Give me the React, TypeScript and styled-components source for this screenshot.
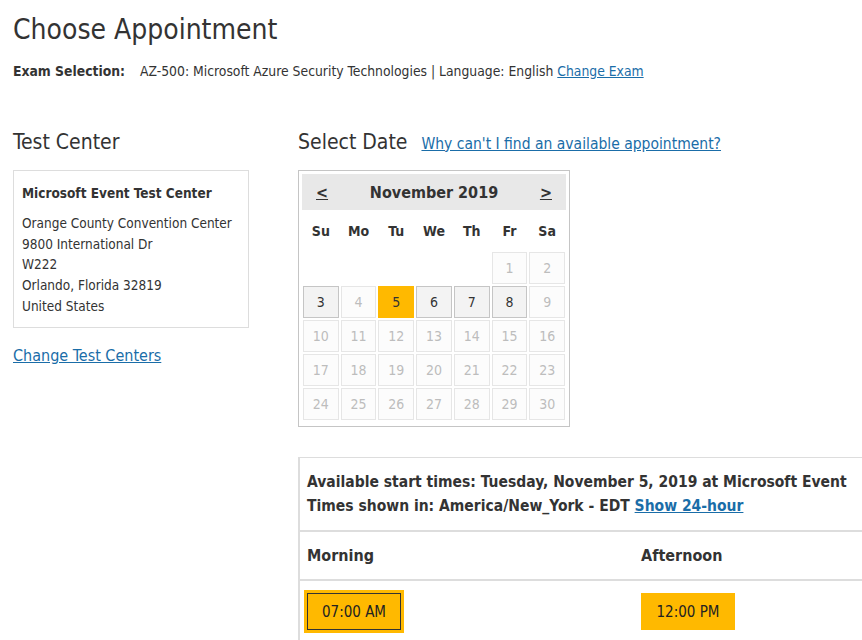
import styled, { createGlobalStyle } from 'styled-components';

const GlobalStyle = createGlobalStyle`
  html, body {
    margin: 0;
    overflow: hidden;
    background: #fff;
  }
  body {
    font-family: 'DejaVu Sans Condensed', 'DejaVu Sans', sans-serif;
    color: #333;
  }
`;

const LINK = '#1a6da8';

const Page = styled.div`
  padding: 12px 13px;
  width: 100vw;
  box-sizing: border-box;
`;
const Title = styled.h1`
  margin: 0;
  font-size: 28px;
  font-weight: normal;
  line-height: 36px;
`;
const ExamLine = styled.div`
  margin-top: 13px;
  font-size: 13.8px;
  line-height: 20px;
  white-space: nowrap;
`;
const ExamLabel = styled.b`
  margin-right: 11px;
`;
const Link = styled.a`
  color: ${LINK};
  text-decoration: underline;
  cursor: pointer;
`;
const Columns = styled.div`
  display: flex;
  margin-top: 46px;
`;
const LeftCol = styled.div`
  flex: 0 0 285px;
`;
const RightCol = styled.div`
  flex: 1;
  min-width: 0;
`;
const Heading = styled.h2`
  margin: 0;
  font-size: 21px;
  font-weight: normal;
  line-height: 30px;
`;
const CenterBox = styled.div`
  margin-top: 13px;
  width: 236px;
  box-sizing: border-box;
  border: 1px solid #ddd;
  padding: 12px 8px 10px;
  font-size: 13.5px;
  line-height: 20.8px;
`;
const CenterName = styled.div`
  font-weight: bold;
  margin-bottom: 9px;
`;
const ChangeCenters = styled(Link)`
  display: block;
  margin-top: 18px;
  font-size: 16px;
`;
const DateHead = styled.div`
  display: flex;
  align-items: baseline;
  gap: 14px;
`;
const HelpLink = styled(Link)`
  font-size: 15.5px;
`;
const Calendar = styled.div`
  margin-top: 13px;
  width: 272px;
  box-sizing: border-box;
  border: 1px solid #c5c5c5;
  padding: 3px;
`;
const CalHeader = styled.div`
  height: 36px;
  background: #e8e8e8;
  display: flex;
  align-items: center;
  justify-content: space-between;
  padding: 0 14px;
  font-weight: bold;
  font-size: 16px;
`;
const NavArrow = styled.a`
  text-decoration: underline;
  color: #333;
  font-size: 16px;
`;
const Weekdays = styled.div`
  display: grid;
  grid-template-columns: repeat(7, 1fr);
  height: 42px;
  align-items: center;
  text-align: center;
  font-weight: bold;
  font-size: 14px;
`;
const DaysGrid = styled.div`
  display: grid;
  grid-template-columns: repeat(7, 1fr);
  gap: 2px;
  padding: 0 1px 3px;
`;
type DayKind = 'open' | 'off' | 'selected' | 'empty';
const DayCell = styled.div<{ $kind: DayKind }>`
  height: 32px;
  box-sizing: border-box;
  display: flex;
  align-items: center;
  justify-content: center;
  font-size: 14px;
  border: 1px solid
    ${p => (p.$kind === 'open' ? '#c5c5c5' : p.$kind === 'off' ? '#e6e6e6' : p.$kind === 'selected' ? '#ffb900' : 'transparent')};
  background: ${p => (p.$kind === 'open' ? '#f3f3f3' : p.$kind === 'off' ? '#fcfcfc' : p.$kind === 'selected' ? '#ffb900' : 'transparent')};
  color: ${p => (p.$kind === 'off' ? '#bdbdbd' : '#333')};
`;
const TimesPanel = styled.div`
  margin-top: 30px;
  width: 720px;
  border-top: 1px solid #ddd;
  border-left: 2px solid #ddd;
`;
const TimesInfo = styled.div`
  padding: 12px 7px 12px;
  font-weight: bold;
  font-size: 15.5px;
  line-height: 24px;
  white-space: nowrap;
`;
const SlotRow = styled.div`
  display: grid;
  grid-template-columns: 334px 1fr;
  border-top: 2px solid #ddd;
`;
const ColHead = styled.div`
  padding: 13px 7px 12px;
  font-weight: bold;
  font-size: 16px;
  line-height: 22px;
`;
const SlotCell = styled.div`
  padding: 12px 7px;
`;
const SlotButton = styled.button<{ $active?: boolean }>`
  width: 94px;
  height: 37px;
  font-family: inherit;
  font-size: 15px;
  color: #222;
  background: #ffb900;
  border: 1px solid ${p => (p.$active ? '#333' : '#ffb900')};
  box-shadow: ${p => (p.$active ? '0 0 0 3px #ffb900' : 'none')};
  padding: 0;
`;

const weekdays = ['Su', 'Mo', 'Tu', 'We', 'Th', 'Fr', 'Sa'];
const openDays = [3, 6, 7, 8];

const days: { label: string; kind: DayKind }[] = [
  ...Array.from({ length: 5 }, () => ({ label: '', kind: 'empty' as DayKind })),
  ...Array.from({ length: 30 }, (_, i) => {
    const d = i + 1;
    const kind: DayKind = d === 5 ? 'selected' : openDays.includes(d) ? 'open' : 'off';
    return { label: String(d), kind };
  }),
];

const App = () => {
  return (
    <Page>
      <GlobalStyle />
      <Title>Choose Appointment</Title>
      <ExamLine>
        <ExamLabel>Exam Selection:</ExamLabel> AZ-500: Microsoft Azure Security Technologies | Language: English{' '}
        <Link>Change Exam</Link>
      </ExamLine>

      <Columns>
        <LeftCol>
          <Heading>Test Center</Heading>
          <CenterBox>
            <CenterName>Microsoft Event Test Center</CenterName>
            <div>Orange County Convention Center</div>
            <div>9800 International Dr</div>
            <div>W222</div>
            <div>Orlando, Florida 32819</div>
            <div>United States</div>
          </CenterBox>
          <ChangeCenters>Change Test Centers</ChangeCenters>
        </LeftCol>

        <RightCol>
          <DateHead>
            <Heading>Select Date</Heading>
            <HelpLink>Why can't I find an available appointment?</HelpLink>
          </DateHead>
          <Calendar>
            <CalHeader>
              <NavArrow>&lt;</NavArrow>
              <span>November 2019</span>
              <NavArrow>&gt;</NavArrow>
            </CalHeader>
            <Weekdays>
              {weekdays.map(w => (
                <span key={w}>{w}</span>
              ))}
            </Weekdays>
            <DaysGrid>
              {days.map((d, i) => (
                <DayCell key={i} $kind={d.kind}>
                  {d.label}
                </DayCell>
              ))}
            </DaysGrid>
          </Calendar>

          <TimesPanel>
            <TimesInfo>
              Available start times: Tuesday, November 5, 2019 at Microsoft Event
              <br />
              Times shown in: America/New_York - EDT <Link>Show 24-hour</Link>
            </TimesInfo>
            <SlotRow>
              <ColHead>Morning</ColHead>
              <ColHead>Afternoon</ColHead>
            </SlotRow>
            <SlotRow>
              <SlotCell>
                <SlotButton $active>07:00 AM</SlotButton>
              </SlotCell>
              <SlotCell>
                <SlotButton>12:00 PM</SlotButton>
              </SlotCell>
            </SlotRow>
          </TimesPanel>
        </RightCol>
      </Columns>
    </Page>
  );
};

export default App;
